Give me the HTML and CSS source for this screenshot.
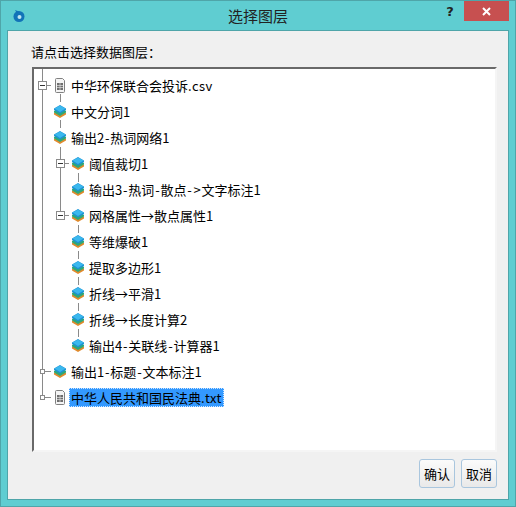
FILE: index.html
```html
<!DOCTYPE html>
<html lang="zh-CN">
<head>
    <meta charset="UTF-8">
    <title>选择图层</title>
    <link rel="stylesheet" href="styles.css">
</head>
<body>
    <div class="window">
        <div class="title-bar">
            <svg class="app-icon" width="14" height="14" viewBox="0 0 14 14">
                <circle cx="7" cy="7.500" r="5.500" fill="#1273b8"/>
                <circle cx="7.500" cy="8" r="2" fill="#bfe6f0"/>
                <path d="M3 1l4 1.500-2 2z" fill="#1273b8"/>
            </svg>
            <div class="title-text">选择图层</div>
            <div class="help-btn">?</div>
            <div class="close-btn">
                <svg width="9" height="9" viewBox="0 0 9 9"><path d="M1 1l7 7M8 1l-7 7" stroke="#fff" stroke-width="2"/></svg>
            </div>
        </div>

        <div class="client">
            <div class="prompt">请点击选择数据图层<span class="colon">：</span></div>

            <div class="tree">
                <!-- 树的连接线 -->
                <svg class="tree-lines" width="120" height="350" viewBox="0 0 120 350">
                    <path class="line" d="M8.500 0V326M13 16.500H17M11 302.500H17M11 328.500H17"/>
                    <path class="line" d="M26.500 25V33M26.500 51V59M26.500 78V90M26.500 99V143M31 94.500H35M31 146.500H35"/>
                    <path class="line" d="M44.500 104V113M44.500 156V164M44.500 182V190M44.500 208V216M44.500 234V242M44.500 260V268"/>
                </svg>

                <div class="row depth-0"><span class="box minus"></span><svg class="ic"><use href="#file"/></svg><span class="label">中华环保联合会投诉<span class="ext">.csv</span></span></div>
                <div class="row depth-0"><svg class="ic"><use href="#layer"/></svg><span class="label">中文分词1</span></div>
                <div class="row depth-0"><svg class="ic"><use href="#layer"/></svg><span class="label">输出2<span class="hy">-</span>热词网络1</span></div>
                <div class="row depth-1"><span class="box minus"></span><svg class="ic"><use href="#layer"/></svg><span class="label">阈值裁切1</span></div>
                <div class="row depth-1"><svg class="ic"><use href="#layer"/></svg><span class="label">输出3<span class="hy">-</span>热词<span class="hy">-</span>散点<span class="hy">-</span><span class="hy">&gt;</span>文字标注1</span></div>
                <div class="row depth-1"><span class="box minus"></span><svg class="ic"><use href="#layer"/></svg><span class="label">网格属性→散点属性1</span></div>
                <div class="row depth-1"><svg class="ic"><use href="#layer"/></svg><span class="label">等维爆破1</span></div>
                <div class="row depth-1"><svg class="ic"><use href="#layer"/></svg><span class="label">提取多边形1</span></div>
                <div class="row depth-1"><svg class="ic"><use href="#layer"/></svg><span class="label">折线→平滑1</span></div>
                <div class="row depth-1"><svg class="ic"><use href="#layer"/></svg><span class="label">折线→长度计算2</span></div>
                <div class="row depth-1"><svg class="ic"><use href="#layer"/></svg><span class="label">输出4<span class="hy">-</span>关联线<span class="hy">-</span>计算器1</span></div>
                <div class="row depth-0"><span class="box small"></span><svg class="ic"><use href="#layer"/></svg><span class="label">输出1<span class="hy">-</span>标题<span class="hy">-</span>文本标注1</span></div>
                <div class="row depth-0"><span class="box small"></span><svg class="ic"><use href="#file"/></svg><span class="label selected">中华人民共和国民法典<span class="ext">.txt</span></span></div>
            </div>

            <div class="buttons">
                <button class="btn">确认</button>
                <button class="btn">取消</button>
            </div>
        </div>
    </div>

    <!-- 图标 -->
    <svg class="defs" width="0" height="0">
        <symbol id="layer" viewBox="0 0 14 15">
            <path d="M1 9L7 5.500 13 9v1.500L7 14 1 10.500z" fill="#e08a2c"/>
            <path d="M1 7L7 3.500 13 7v1.500L7 12 1 8.500z" fill="#2fa878"/>
            <path d="M1 4.500L7 1l6 3.500V6L7 9.500 1 6z" fill="#1e93d4"/>
            <path d="M1.500 4.500L7 1.500l5.500 3L7 8z" fill="#3bb8ee"/>
        </symbol>
        <symbol id="file" viewBox="0 0 14 15">
            <path d="M2.500 1.500Q2.500 .5 3.500 .5H9.500L11.500 2.500V13.500Q11.500 14.500 10.500 14.500H3.500Q2.500 14.500 2.500 13.500Z" fill="#f4f4f4" stroke="#808080"/>
            <rect x="4" y="5" width="6" height="7" fill="#6e6e6e"/>
            <path d="M7 5v7M4 7.500h6M4 9.500h6" stroke="#e0e0e0" stroke-width=".7"/>
        </symbol>
    </svg>
</body>
</html>
```

FILE: styles.css
```css
* {
    box-sizing: border-box;
}

body {
    margin: 0;
    width: 516px;
    height: 507px;
    overflow: hidden;
    font-family: "Noto Sans CJK SC", "Liberation Sans", sans-serif;
    font-size: 13px;
    color: #000;
}

.window {
    width: 516px;
    height: 507px;
    background-color: #5fcdd1;
    border: 1px solid #4fa5a9;
    padding: 0 6px 6px;
    display: flex;
    flex-direction: column;
}

.title-bar {
    height: 29px;
    display: flex;
    align-items: center;
    position: relative;
    flex-shrink: 0;
}

.app-icon {
    margin-left: 5px;
}

.title-text {
    position: absolute;
    left: 0;
    right: 0;
    text-align: center;
    font-size: 15px;
    color: #222;
}

.help-btn {
    margin-left: auto;
    width: 14px;
    margin-right: 7px;
    margin-bottom: 9px;
    font-family: "DejaVu Sans", sans-serif;
    font-weight: bold;
    font-size: 13px;
    color: #222;
    text-align: center;
}

.close-btn {
    width: 45px;
    height: 20px;
    margin-bottom: 9px;
    background-color: #c75050;
    display: flex;
    align-items: center;
    justify-content: center;
}

.client {
    flex: 1;
    background-color: #f0f0f0;
    border: 1px solid #4fa5a9;
    padding: 11px 11px 9px 24px;
    display: flex;
    flex-direction: column;
}

.prompt {
    height: 20px;
    line-height: 20px;
    margin-left: -1px;
    margin-bottom: 5px;
}

.colon {
    font-family: "Noto Sans CJK JP", sans-serif;
}

.tree {
    position: relative;
    height: 385px;
    background-color: #fff;
    border-top: 2px solid #696969;
    border-left: 2px solid #696969;
    border-right: 2px solid #f5f5f5;
    border-bottom: 2px solid #f5f5f5;
    padding-top: 3px;
}

.tree-lines {
    position: absolute;
    left: 0;
    top: 0;
}

.line {
    fill: none;
    stroke: #8a8a8a;
    stroke-width: 1;
}

.row {
    position: relative;
    height: 26px;
    padding-top: 1px;
    display: flex;
    align-items: center;
}

.depth-0 {
    padding-left: 19px;
}

.depth-1 {
    padding-left: 37px;
}

.box {
    position: absolute;
    width: 9px;
    height: 9px;
    border: 1px solid #8a8a8a;
    background-color: #fff;
}

.depth-0 .box {
    left: 4px;
}

.depth-1 .box {
    left: 22px;
}

.depth-0 .small {
    left: 6px;
    width: 5px;
    height: 5px;
}

.minus::after {
    content: "";
    position: absolute;
    left: 1px;
    top: 3px;
    width: 5px;
    height: 1px;
    background-color: #333;
}

.ic {
    width: 14px;
    height: 15px;
    flex-shrink: 0;
}

.label {
    margin-left: 2px;
    padding: 0 2px;
    line-height: 19px;
    white-space: nowrap;
}

/* 连字符和扩展名比默认字体略宽 */
.hy {
    padding: 0 0.8px;
}

.ext {
    letter-spacing: 0.4px;
}

.selected {
    background-color: #3399ff;
    outline: 1px dotted #cfe6ff;
    outline-offset: -1px;
    height: 19px;
}

.buttons {
    display: flex;
    justify-content: flex-end;
    gap: 6px;
    margin-top: 7px;
}

.btn {
    width: 36px;
    height: 29px;
    padding: 0;
    font-family: inherit;
    font-size: 13px;
    color: #000;
    background: linear-gradient(#fbfbfb, #e9e9e9);
    border: 1px solid #a9c6de;
    border-radius: 3px;
}

.defs {
    position: absolute;
}
```
